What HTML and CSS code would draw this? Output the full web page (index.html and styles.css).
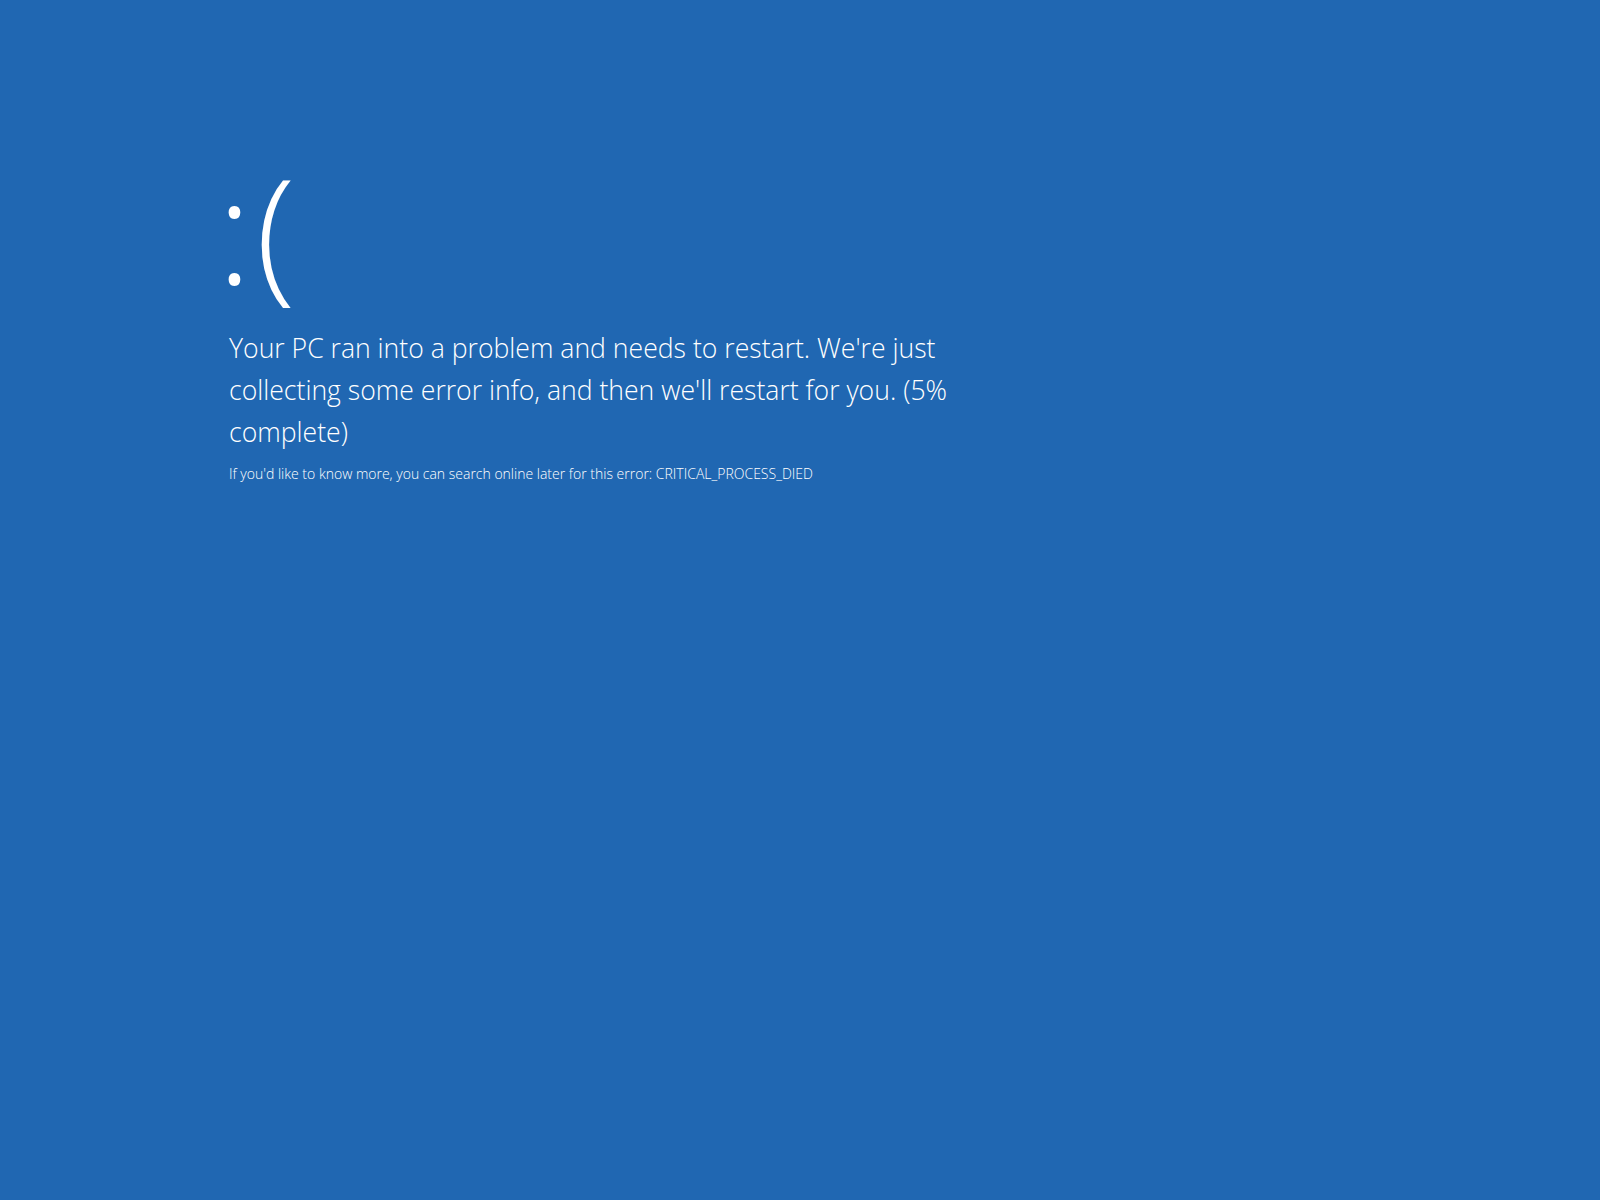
FILE: index.html
```html
<!DOCTYPE html>
<html lang="en">
<head>
  <meta charset="UTF-8">
  <meta name="viewport" content="width=device-width, initial-scale=1.0">
  <title>Your PC ran into a problem</title>
<link rel="stylesheet" href="styles.css">
</head>
<body>
  <!-- blue screen -->
  <div class="bsod">
    <div class="face">:(</div>
    <p class="msg">Your PC ran into a problem and needs to restart. We're just collecting some error info, and then we'll restart for you. (5% complete)</p>
    <p class="more">If you'd like to know more, you can search online later for this error: CRITICAL_PROCESS_DIED</p>
  </div>
</body>
</html>
```

FILE: styles.css
```css
*{margin: 0;padding: 0;}
html,body{
  height: 100%;
  background: #2067b2;
}
.bsod{
  padding: 130px 0 0 229px;
  color: #fff;
  font-family: "Open Sans", "Noto Sans", sans-serif;
  font-weight: 300;
}
.bsod .face{
  font-size: 146px;
  line-height: 197px;
  margin-left: -12px;
  letter-spacing: 4px;
}
.bsod .msg{
  width: 750px;
  font-size: 26.6px;
  line-height: 42px;
}
.bsod .more{
  font-size: 14px;
  line-height: 20px;
  margin-top: 11px;
}
```
